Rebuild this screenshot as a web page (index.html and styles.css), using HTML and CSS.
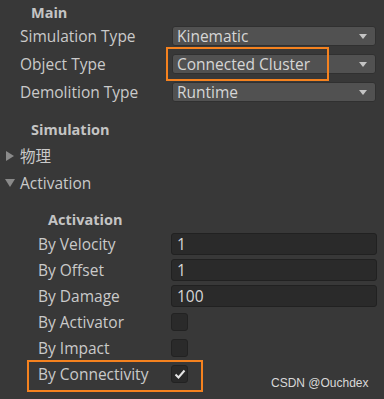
FILE: index.html
```html
<!DOCTYPE html>
<html lang="en">
<head>
    <meta charset="UTF-8">
    <title>Rayfire Rigid Inspector</title>
    <link rel="stylesheet" href="styles.css">
</head>
<body>
    <div class="inspector">
        <div class="header">Main</div>
        <div class="row">
            <span class="label">Simulation Type</span>
            <div class="dropdown"><span>Kinematic</span><i class="arrow"></i></div>
        </div>
        <div class="row">
            <span class="label">Object Type</span>
            <div class="dropdown"><span>Connected Cluster</span><i class="arrow"></i></div>
        </div>
        <div class="row">
            <span class="label">Demolition Type</span>
            <div class="dropdown"><span>Runtime</span><i class="arrow"></i></div>
        </div>

        <div class="header section">Simulation</div>
        <div class="foldout"><i class="tri closed"></i>物理</div>
        <div class="foldout"><i class="tri open"></i>Activation</div>

        <div class="group">
            <div class="header sub">Activation</div>
            <div class="row small">
                <span class="label">By Velocity</span>
                <div class="field">1</div>
            </div>
            <div class="row small">
                <span class="label">By Offset</span>
                <div class="field">1</div>
            </div>
            <div class="row small">
                <span class="label">By Damage</span>
                <div class="field">100</div>
            </div>
            <div class="row small">
                <span class="label">By Activator</span>
                <div class="check"></div>
            </div>
            <div class="row small">
                <span class="label">By Impact</span>
                <div class="check"></div>
            </div>
            <div class="row small">
                <span class="label">By Connectivity</span>
                <div class="check">
                    <svg width="12" height="10" viewBox="0 0 12 10">
                        <path d="M1.5 5.5 L4.5 8.5 L10.5 1.5" fill="none" stroke="#e6e6e6" stroke-width="2"/>
                    </svg>
                </div>
            </div>
        </div>

        <!-- annotation boxes -->
        <div class="mark mark-type"></div>
        <div class="mark mark-conn"></div>
        <div class="watermark">CSDN @Ouchdex</div>
    </div>
</body>
</html>
```

FILE: styles.css
```css
body {
    margin: 0;
    background-color: #383838;
    font-family: "Open Sans", "Noto Sans", "Noto Sans CJK SC", sans-serif;
    font-size: 15.5px;
    color: #cacaca;
}
.inspector {
    position: relative;
    width: 384px;
    height: 399px;
    overflow: hidden;
    padding-top: 2px;
    box-sizing: border-box;
}
.header {
    height: 20px;
    line-height: 22px;
    padding-left: 31px;
    font-weight: bold;
    font-size: 14.5px;
    color: #c4c4c4;
}
.header.section {
    margin-top: 12px;
    height: 24px;
    line-height: 24px;
}
.header.sub {
    height: 22px;
    padding-left: 48px;
    margin-top: 13px;
}
.row {
    display: flex;
    align-items: center;
    height: 28px;
    padding-left: 20px;
    padding-right: 8px;
}
.row .label {
    width: 152px;
    flex-shrink: 0;
    white-space: nowrap;
}
.row.small {
    height: 26px;
    padding-left: 38px;
    padding-right: 7px;
}
.row.small .label {
    width: 133px;
}
.dropdown {
    flex: 1;
    height: 20px;
    display: flex;
    align-items: center;
    justify-content: space-between;
    padding: 0 8px 0 4px;
    background: #515151;
    border: 1px solid #303030;
    border-radius: 3px;
    color: #d6d6d6;
    box-sizing: border-box;
}
.arrow {
    width: 0;
    height: 0;
    border-left: 4px solid transparent;
    border-right: 4px solid transparent;
    border-top: 5px solid #c4c4c4;
}
.foldout {
    display: flex;
    align-items: center;
    height: 27px;
    padding-left: 5px;
}
.tri {
    width: 0;
    height: 0;
    margin-right: 5px;
}
.tri.closed {
    margin-left: 1px;
    margin-right: 6px;
    border-top: 5px solid transparent;
    border-bottom: 5px solid transparent;
    border-left: 8px solid #8a8a8a;
}
.tri.open {
    border-left: 5px solid transparent;
    border-right: 5px solid transparent;
    border-top: 8px solid #8a8a8a;
}
.field {
    flex: 1;
    height: 22px;
    line-height: 20px;
    padding-left: 5px;
    background: #2a2a2a;
    border: 1px solid #212121;
    border-radius: 3px;
    color: #d6d6d6;
    box-sizing: border-box;
}
.check {
    width: 17px;
    height: 18px;
    background: #2a2a2a;
    border: 1px solid #222222;
    border-radius: 3px;
    box-sizing: border-box;
    display: flex;
    align-items: center;
    justify-content: center;
}
.mark {
    position: absolute;
    border: 2px solid #f5821f;
    box-sizing: border-box;
}
.mark-type {
    left: 166px;
    top: 47px;
    width: 163px;
    height: 34px;
}
.mark-conn {
    left: 27px;
    top: 360px;
    width: 176px;
    height: 32px;
}
.watermark {
    position: absolute;
    left: 271px;
    top: 376px;
    font-family: "Liberation Sans", sans-serif;
    font-size: 12px;
    color: #d8d8d8;
}
```
